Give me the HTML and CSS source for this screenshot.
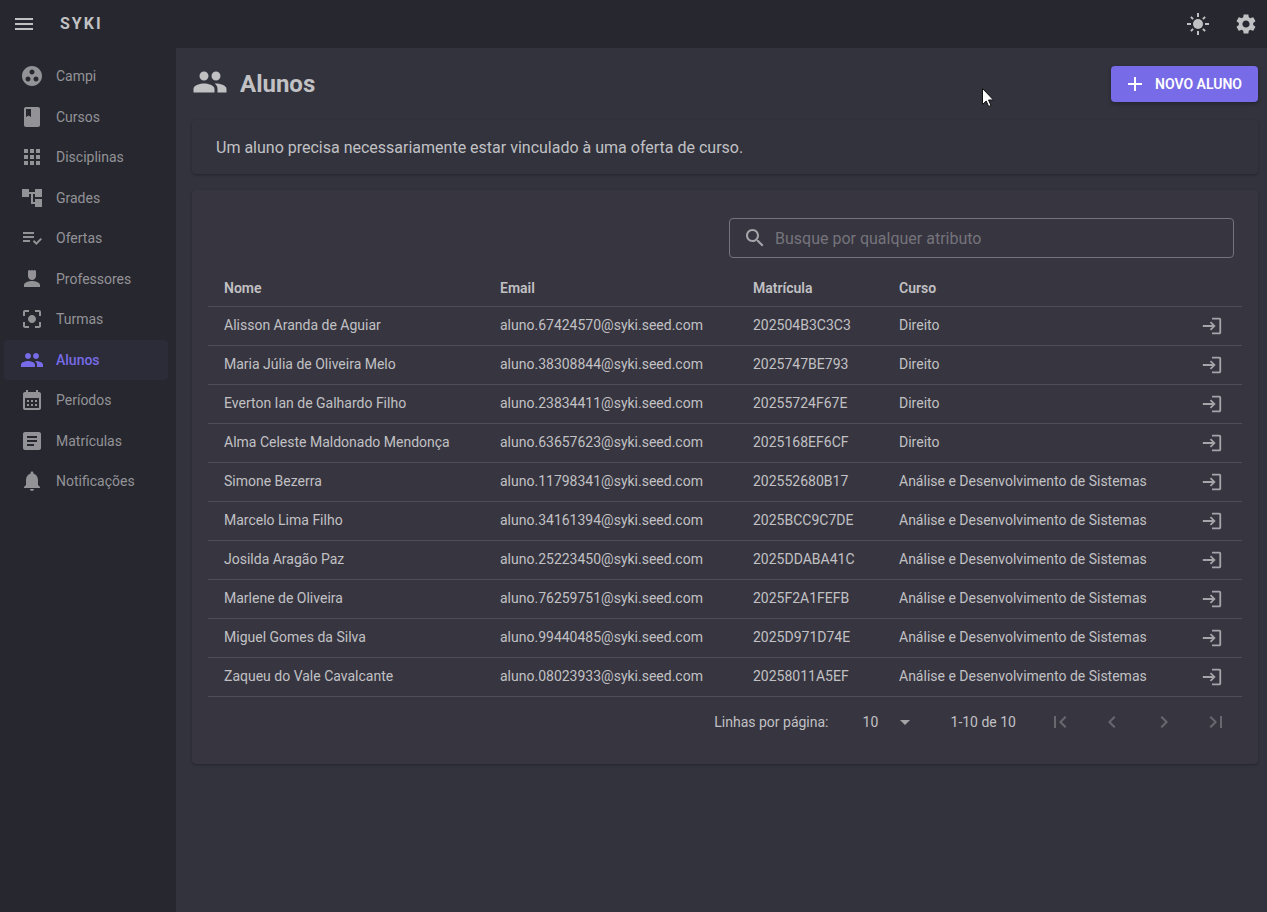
FILE: index.html
```
<!DOCTYPE html>
<html lang="pt-BR">
<head>
<meta charset="utf-8">
<meta name="viewport" content="width=device-width, initial-scale=1">
<title>SYKI - Alunos</title>
<link rel="stylesheet" href="styles.css">
</head>
<body>
<svg class="sprite" aria-hidden="true">
  <symbol id="i-enter" viewBox="0 0 24 24"><path d="M11 7 9.600 8.400l2.600 2.600H2v2h10.200l-2.600 2.600L11 17l5-5zM20 19h-8v2h8c1.100 0 2-.9 2-2V5c0-1.100-.9-2-2-2h-8v2h8z"/></symbol>
  <symbol id="i-people" viewBox="0 0 24 24"><path d="M16 11c1.660 0 2.990-1.340 2.990-3S17.660 5 16 5c-1.660 0-3 1.340-3 3s1.340 3 3 3zm-8 0c1.660 0 2.990-1.340 2.990-3S9.660 5 8 5C6.340 5 5 6.340 5 8s1.340 3 3 3zm0 2c-2.330 0-7 1.170-7 3.500V19h14v-2.500c0-2.330-4.670-3.500-7-3.500zm8 0c-.29 0-.62.02-.97.05 1.160.84 1.970 1.970 1.970 3.450V19h6v-2.500c0-2.330-4.670-3.500-7-3.500z"/></symbol>
</svg>
<header class="appbar">
  <button class="icon-btn" type="button" aria-label="Menu"><svg class="icon" viewBox="0 0 24 24"><path d="M3 18h18v-2H3v2zm0-5h18v-2H3v2zm0-7v2h18V6H3z"/></svg></button>
  <a class="brand" href="#">SYKI</a>
  <button class="icon-btn push" type="button" aria-label="Tema claro"><svg class="icon" viewBox="0 0 24 24"><circle cx="12" cy="12" r="5"/><path d="M11 1h2v4h-2zM11 19h2v4h-2zM1 11h4v2H1zM19 11h4v2h-4zM4.200 5.600 5.600 4.200l2.200 2.200-1.400 1.400zM16.200 17.600l1.400-1.400 2.200 2.200-1.400 1.400zM18.400 4.200l1.400 1.400-2.200 2.200-1.400-1.400zM6.400 16.200l1.400 1.400-2.200 2.200-1.400-1.400z"/></svg></button>
  <button class="icon-btn" type="button" aria-label="Configurações"><svg class="icon" viewBox="0 0 24 24"><path d="M19.140 12.940c.04-.3.06-.61.06-.94 0-.32-.02-.64-.07-.94l2.030-1.580c.18-.14.23-.41.12-.61l-1.920-3.320c-.12-.22-.37-.29-.59-.22l-2.390.96c-.5-.38-1.030-.7-1.620-.94l-.36-2.540c-.04-.24-.24-.41-.48-.41h-3.840c-.24 0-.43.17-.47.41l-.36 2.540c-.59.24-1.130.57-1.620.94l-2.390-.96c-.22-.08-.47 0-.59.22L2.740 8.870c-.12.21-.08.47.12.61l2.030 1.580c-.05.3-.09.63-.09.94s.02.64.07.94l-2.030 1.580c-.18.14-.23.41-.12.61l1.920 3.320c.12.22.37.29.59.22l2.390-.96c.5.38 1.030.7 1.620.94l.36 2.540c.05.24.24.41.48.41h3.840c.24 0 .44-.17.47-.41l.36-2.540c.59-.24 1.130-.56 1.620-.94l2.390.96c.22.08.47 0 .59-.22l1.920-3.320c.12-.22.07-.47-.12-.61l-2.010-1.580zM12 15.600c-1.980 0-3.600-1.620-3.600-3.600s1.620-3.600 3.600-3.600 3.600 1.620 3.600 3.600-1.620 3.600-3.600 3.600z"/></svg></button>
</header>
<div class="layout">
  <nav class="drawer" aria-label="Principal">
    <a class="nav-link" href="#"><svg class="icon" viewBox="0 0 24 24"><path d="M12 2C6.480 2 2 6.480 2 12s4.480 10 10 10 10-4.480 10-10S17.520 2 12 2zM8 17.500c-1.380 0-2.500-1.120-2.500-2.500s1.120-2.500 2.500-2.500 2.500 1.120 2.500 2.500-1.120 2.500-2.500 2.500zM9.500 8c0-1.380 1.120-2.500 2.500-2.500s2.500 1.120 2.500 2.500-1.120 2.500-2.500 2.500S9.500 9.380 9.500 8zm6.500 9.500c-1.380 0-2.500-1.120-2.500-2.500s1.120-2.500 2.500-2.500 2.500 1.120 2.500 2.500-1.120 2.500-2.500 2.500z"/></svg>Campi</a>
    <a class="nav-link" href="#"><svg class="icon" viewBox="0 0 24 24"><path d="M18 2H6c-1.100 0-2 .9-2 2v16c0 1.100.9 2 2 2h12c1.100 0 2-.9 2-2V4c0-1.100-.9-2-2-2zM6 4h5v8l-2.500-1.500L6 12V4z"/></svg>Cursos</a>
    <a class="nav-link" href="#"><svg class="icon" viewBox="0 0 24 24"><path d="M4 8h4V4H4v4zm6 12h4v-4h-4v4zm-6 0h4v-4H4v4zm0-6h4v-4H4v4zm6 0h4v-4h-4v4zm6-10v4h4V4h-4zm-6 4h4V4h-4v4zm6 6h4v-4h-4v4zm0 6h4v-4h-4v4z"/></svg>Disciplinas</a>
    <a class="nav-link" href="#"><svg class="icon" viewBox="0 0 24 24"><path d="M22 11V3h-7v3H9V3H2v8h7V8h2v10h4v3h7v-8h-7v3h-2V8h2v3z"/></svg>Grades</a>
    <a class="nav-link" href="#"><svg class="icon" viewBox="0 0 24 24"><path d="M3 10h11v2H3zM3 6h11v2H3zM3 14h7v2H3zM20.590 11.930l-4.250 4.240-2.120-2.120-1.410 1.410 3.530 3.540L22 13.340z"/></svg>Ofertas</a>
    <a class="nav-link" href="#"><svg class="icon" viewBox="0 0 24 24"><path d="M12 14c-2.670 0-8 1.340-8 4v2h16v-2c0-2.660-5.330-4-8-4zM8 9c0 2.210 1.790 4 4 4s4-1.790 4-4V4.500c0-.83-.67-1.500-1.500-1.500-.52 0-.98.27-1.250.67C12.980 3.270 12.520 3 12 3s-.98.27-1.250.67C10.480 3.270 10.020 3 9.500 3 8.670 3 8 3.670 8 4.500V9z"/></svg>Professores</a>
    <a class="nav-link" href="#"><svg class="icon" viewBox="0 0 24 24"><path d="M5 15H3v4c0 1.100.9 2 2 2h4v-2H5v-4zM5 5h4V3H5c-1.100 0-2 .9-2 2v4h2V5zm14-2h-4v2h4v4h2V5c0-1.100-.9-2-2-2zm0 16h-4v2h4c1.100 0 2-.9 2-2v-4h-2v4zM12 8c-2.210 0-4 1.790-4 4s1.790 4 4 4 4-1.790 4-4-1.790-4-4-4z"/></svg>Turmas</a>
    <a class="nav-link active" href="#" aria-current="page"><svg class="icon"><use href="#i-people"/></svg>Alunos</a>
    <a class="nav-link" href="#"><svg class="icon" viewBox="0 0 24 24"><path d="M19 4h-1V2h-2v2H8V2H6v2H5c-1.110 0-1.990.9-1.990 2L3 20c0 1.100.89 2 2 2h14c1.100 0 2-.9 2-2V6c0-1.100-.9-2-2-2zm0 16H5V10h14v10zM9 14H7v-2h2v2zm4 0h-2v-2h2v2zm4 0h-2v-2h2v2zm-8 4H7v-2h2v2zm4 0h-2v-2h2v2zm4 0h-2v-2h2v2z"/></svg>Períodos</a>
    <a class="nav-link" href="#"><svg class="icon" viewBox="0 0 24 24"><path d="M19 3H5c-1.100 0-2 .9-2 2v14c0 1.100.9 2 2 2h14c1.100 0 2-.9 2-2V5c0-1.100-.9-2-2-2zm-5 14H7v-2h7v2zm3-4H7v-2h10v2zm0-4H7V7h10v2z"/></svg>Matrículas</a>
    <a class="nav-link" href="#"><svg class="icon" viewBox="0 0 24 24"><path d="M12 22c1.100 0 2-.9 2-2h-4c0 1.100.89 2 2 2zm6-6v-5c0-3.070-1.640-5.640-4.500-6.320V4c0-.83-.67-1.500-1.500-1.500s-1.500.67-1.500 1.500v.68C7.630 5.360 6 7.920 6 11v5l-2 2v1h16v-1l-2-2z"/></svg>Notificações</a>
  </nav>
  <main class="content">
    <div class="page-head">
      <svg class="icon icon-lg"><use href="#i-people"/></svg>
      <h1 class="title">Alunos</h1>
      <button class="btn-primary" type="button"><svg class="icon" viewBox="0 0 24 24"><path d="M19 13h-6v6h-2v-6H5v-2h6V5h2v6h6v2z"/></svg>NOVO ALUNO</button>
    </div>
    <p class="notice">Um aluno precisa necessariamente estar vinculado à uma oferta de curso.</p>
    <section class="card">
      <label class="search">
        <svg class="icon" viewBox="0 0 24 24"><path d="M15.500 14h-.79l-.28-.27C15.410 12.590 16 11.110 16 9.500 16 5.910 13.090 3 9.500 3S3 5.910 3 9.500 5.910 16 9.500 16c1.610 0 3.090-.59 4.230-1.570l.27.28v.79l5 4.990L20.490 19l-4.990-5zm-6 0C7.010 14 5 11.990 5 9.500S7.010 5 9.500 5 14 7.010 14 9.500 11.990 14 9.500 14z"/></svg>
        <input class="search-input" type="text" placeholder="Busque por qualquer atributo" aria-label="Busque por qualquer atributo">
      </label>
      <table class="table">
        <colgroup><col class="col-name"><col class="col-email"><col class="col-code"><col><col class="col-act"></colgroup>
        <thead><tr><th>Nome</th><th>Email</th><th>Matrícula</th><th>Curso</th><th></th></tr></thead>
        <tbody>
          <tr><td>Alisson Aranda de Aguiar</td><td>aluno.67424570@syki.seed.com</td><td>202504B3C3C3</td><td>Direito</td><td class="act"><button class="row-btn" type="button" aria-label="Entrar"><svg class="icon icon-row"><use href="#i-enter"/></svg></button></td></tr>
          <tr><td>Maria Júlia de Oliveira Melo</td><td>aluno.38308844@syki.seed.com</td><td>2025747BE793</td><td>Direito</td><td class="act"><button class="row-btn" type="button" aria-label="Entrar"><svg class="icon icon-row"><use href="#i-enter"/></svg></button></td></tr>
          <tr><td>Everton Ian de Galhardo Filho</td><td>aluno.23834411@syki.seed.com</td><td>20255724F67E</td><td>Direito</td><td class="act"><button class="row-btn" type="button" aria-label="Entrar"><svg class="icon icon-row"><use href="#i-enter"/></svg></button></td></tr>
          <tr><td>Alma Celeste Maldonado Mendonça</td><td>aluno.63657623@syki.seed.com</td><td>2025168EF6CF</td><td>Direito</td><td class="act"><button class="row-btn" type="button" aria-label="Entrar"><svg class="icon icon-row"><use href="#i-enter"/></svg></button></td></tr>
          <tr><td>Simone Bezerra</td><td>aluno.11798341@syki.seed.com</td><td>202552680B17</td><td>Análise e Desenvolvimento de Sistemas</td><td class="act"><button class="row-btn" type="button" aria-label="Entrar"><svg class="icon icon-row"><use href="#i-enter"/></svg></button></td></tr>
          <tr><td>Marcelo Lima Filho</td><td>aluno.34161394@syki.seed.com</td><td>2025BCC9C7DE</td><td>Análise e Desenvolvimento de Sistemas</td><td class="act"><button class="row-btn" type="button" aria-label="Entrar"><svg class="icon icon-row"><use href="#i-enter"/></svg></button></td></tr>
          <tr><td>Josilda Aragão Paz</td><td>aluno.25223450@syki.seed.com</td><td>2025DDABA41C</td><td>Análise e Desenvolvimento de Sistemas</td><td class="act"><button class="row-btn" type="button" aria-label="Entrar"><svg class="icon icon-row"><use href="#i-enter"/></svg></button></td></tr>
          <tr><td>Marlene de Oliveira</td><td>aluno.76259751@syki.seed.com</td><td>2025F2A1FEFB</td><td>Análise e Desenvolvimento de Sistemas</td><td class="act"><button class="row-btn" type="button" aria-label="Entrar"><svg class="icon icon-row"><use href="#i-enter"/></svg></button></td></tr>
          <tr><td>Miguel Gomes da Silva</td><td>aluno.99440485@syki.seed.com</td><td>2025D971D74E</td><td>Análise e Desenvolvimento de Sistemas</td><td class="act"><button class="row-btn" type="button" aria-label="Entrar"><svg class="icon icon-row"><use href="#i-enter"/></svg></button></td></tr>
          <tr><td>Zaqueu do Vale Cavalcante</td><td>aluno.08023933@syki.seed.com</td><td>20258011A5EF</td><td>Análise e Desenvolvimento de Sistemas</td><td class="act"><button class="row-btn" type="button" aria-label="Entrar"><svg class="icon icon-row"><use href="#i-enter"/></svg></button></td></tr>
        </tbody>
      </table>
      <div class="pager">
        <label for="page-size">Linhas por página:</label>
        <span class="select-wrap">
          <select class="select" id="page-size"><option>10</option><option>25</option><option>50</option></select>
          <svg class="icon caret" viewBox="0 0 24 24"><path d="M7 10l5 5 5-5z"/></svg>
        </span>
        <span class="range">1-10 de 10</span>
        <div class="pages">
          <button class="page-btn" type="button" disabled aria-label="Primeira página"><svg class="icon" viewBox="0 0 24 24"><path d="M18.410 16.590 13.820 12l4.590-4.590L17 6l-6 6 6 6zM6 6h2v12H6z"/></svg></button>
          <button class="page-btn" type="button" disabled aria-label="Página anterior"><svg class="icon" viewBox="0 0 24 24"><path d="M15.410 7.410 14 6l-6 6 6 6 1.410-1.410L10.830 12z"/></svg></button>
          <button class="page-btn" type="button" disabled aria-label="Próxima página"><svg class="icon" viewBox="0 0 24 24"><path d="M10 6 8.590 7.410 13.170 12l-4.580 4.590L10 18l6-6z"/></svg></button>
          <button class="page-btn" type="button" disabled aria-label="Última página"><svg class="icon" viewBox="0 0 24 24"><path d="M5.590 7.410 10.180 12l-4.590 4.590L7 18l6-6-6-6zM16 6h2v12h-2z"/></svg></button>
        </div>
      </div>
    </section>
  </main>
</div>
<svg class="cursor" viewBox="0 0 12 19" aria-hidden="true"><path d="M.5.5v16l3.700-3.500 2.500 5.500 2.300-1-2.500-5.500h5z" fill="#fff" stroke="#111" stroke-width="1"/></svg>
</body>
</html>
```
FILE: styles.css
```
* { box-sizing: border-box; }

body {
  margin: 0;
  min-height: 100vh;
  display: flex;
  flex-direction: column;
  background: #32333d;
  color: #c1c1c4;
  font: 14px/20px Roboto, "Liberation Sans", sans-serif;
}

button, input, select { font: inherit; color: inherit; }
button { border: 0; padding: 0; background: none; }
a { color: inherit; text-decoration: none; }

.sprite { display: none; }
.icon { width: 24px; height: 24px; fill: currentColor; flex: none; display: block; }
.icon-lg { width: 36px; height: 36px; margin-bottom: 4px; }
.icon-row { width: 22px; height: 22px; }

.appbar {
  display: flex;
  align-items: center;
  height: 48px;
  background: #27272f;
}
.icon-btn { padding: 12px; border-radius: 50%; }
.icon-btn.push { margin-left: auto; }
.icon-btn:last-child { margin-right: -3px; }
.brand { margin-left: 12px; font-size: 16px; line-height: 22px; font-weight: 700; letter-spacing: 2px; }

.layout { flex: 1; display: flex; }

.drawer {
  flex: none;
  width: 176px;
  padding: 8px 8px 8px 4px;
  background: #27272f;
  color: #939397;
}
.nav-link {
  display: flex;
  align-items: center;
  gap: 12px;
  padding: 8px 16px;
  border-radius: 4px;
  line-height: 1.75;
}
.nav-link.active { background: #2c2b38; color: #776be7; font-weight: 500; }

.content { flex: 1; min-width: 0; padding: 16px 9px 16px 16px; }

.page-head { display: flex; align-items: center; min-height: 40px; }
.title { margin: 0 0 0 12px; font-size: 24px; line-height: 32px; font-weight: 700; }
.btn-primary {
  display: flex;
  align-items: center;
  gap: 8px;
  height: 36px;
  margin-left: auto;
  padding: 0 16px 0 12px;
  border-radius: 4px;
  background: #776be7;
  color: #fff;
  font-weight: 600;
  box-shadow: 0 2px 4px rgba(0, 0, 0, .3);
}

.notice {
  margin: 16px 0;
  padding: 16px 24px 14px;
  border-radius: 4px;
  font-size: 16px;
  line-height: 24px;
  box-shadow: 0 1px 3px rgba(0, 0, 0, .3);
}

.card {
  padding: 28px 16px 16px;
  border-radius: 4px;
  background: #373540;
  box-shadow: 0 1px 3px rgba(0, 0, 0, .3);
}

.search {
  display: flex;
  align-items: center;
  gap: 8px;
  width: calc(50% - 12px);
  height: 40px;
  margin: 0 8px 12px auto;
  padding: 0 12px 0 13px;
  border: 1px solid #75737b;
  border-radius: 4px;
  color: #a5a4a9;
}
.search-input { flex: 1; min-width: 0; border: 0; padding: 2px 0 0; background: none; outline: 0; font-size: 16px; }
.search-input::placeholder { color: #75747b; opacity: 1; }

.table { width: 100%; border-collapse: collapse; table-layout: fixed; }
.col-name { width: 276px; }
.col-email { width: 253px; }
.col-code { width: 146px; }
.col-act { width: 64px; }
.table th, .table td {
  padding: 0 0 0 16px;
  height: 39px;
  border-bottom: 1px solid #4f4d57;
  text-align: left;
  white-space: nowrap;
}
.table th { height: 36px; font-weight: 600; }
.table td { padding-bottom: 2px; }
.table .act { padding: 0 19px 0 0; }
.row-btn { display: block; margin-left: auto; color: #a5a4a9; }

.pager { display: flex; align-items: center; justify-content: flex-end; height: 51px; padding-right: 2px; }
.select-wrap { position: relative; margin-left: 34px; }
.select { appearance: none; border: 0; background: none; padding: 0 38px 0 0; outline: 0; }
.caret { position: absolute; right: 0; top: -2px; pointer-events: none; color: #a5a4a9; }
.range { margin-left: 34px; }
.pages { display: flex; gap: 4px; margin-left: 20px; }
.page-btn { padding: 12px; color: #69686f; }

.cursor { position: absolute; left: 982px; top: 88px; width: 12px; height: 19px; }
```
